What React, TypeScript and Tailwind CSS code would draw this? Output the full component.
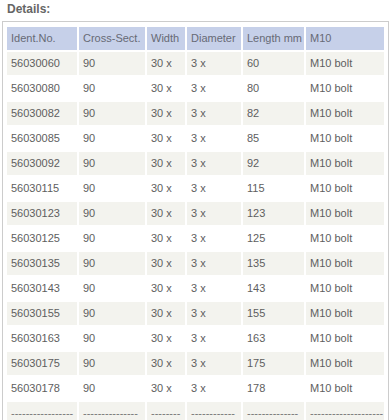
import React from "react";

const rows = [
  ["56030060", "60"],
  ["56030080", "80"],
  ["56030082", "82"],
  ["56030085", "85"],
  ["56030092", "92"],
  ["56030115", "115"],
  ["56030123", "123"],
  ["56030125", "125"],
  ["56030135", "135"],
  ["56030143", "143"],
  ["56030155", "155"],
  ["56030163", "163"],
  ["56030175", "175"],
  ["56030178", "178"],
];

const widths = ["w-[70px]", "w-[66px]", "w-[38px]", "w-[54px]", "w-[61px]", "w-[78px]"];

const dashes = [
  "-----------------",
  "---------------",
  "--------",
  "------------",
  "--------------",
  "--------------------",
];

export default function App() {
  const font = { fontFamily: 'Tahoma, "Liberation Sans", Arial, sans-serif' };
  return (
    <div className="w-[391px] h-[420px] overflow-hidden bg-white" style={font}>
      <div className="pl-[7px] pt-[2px] h-[21px] text-[12px] font-bold text-[#666666] leading-[14px]">
        Details:
      </div>
      <div className="ml-[2px] w-[387px] border border-[#cccccc] px-[2px] pt-[3px]">
        <table className="border-separate border-spacing-[2px] text-[11px] text-[#5e5e5e] table-fixed">
          <thead>
            <tr className="h-[23px]">
              {["Ident.No.", "Cross-Sect.", "Width", "Diameter", "Length mm", "M10"].map((h, i) => (
                <th
                  key={h}
                  className={`${widths[i]} bg-[#c6d0e9] text-left font-normal pl-[4px] pr-0 py-0 whitespace-nowrap text-[#666a75]`}
                >
                  {h}
                </th>
              ))}
            </tr>
          </thead>
          <tbody>
            {rows.map(([id, len], r) => (
              <tr key={id} className={`h-[23px] ${r % 2 === 0 ? "bg-[#f3f3ee]" : "bg-white"}`}>
                <td className="pl-[4px] p-0">{id}</td>
                <td className="pl-[4px] p-0">90</td>
                <td className="pl-[4px] p-0 whitespace-nowrap">30 x</td>
                <td className="pl-[4px] p-0 whitespace-nowrap">3 x</td>
                <td className="pl-[4px] p-0">{len}</td>
                <td className="pl-[4px] p-0 whitespace-nowrap">M10 bolt</td>
              </tr>
            ))}
            <tr className="h-[23px] bg-[#f3f3ee]">
              {dashes.map((d, i) => (
                <td key={i} className="pl-[4px] p-0 whitespace-nowrap overflow-hidden text-[#777]">
                  {d}
                </td>
              ))}
            </tr>
          </tbody>
        </table>
      </div>
    </div>
  );
}
